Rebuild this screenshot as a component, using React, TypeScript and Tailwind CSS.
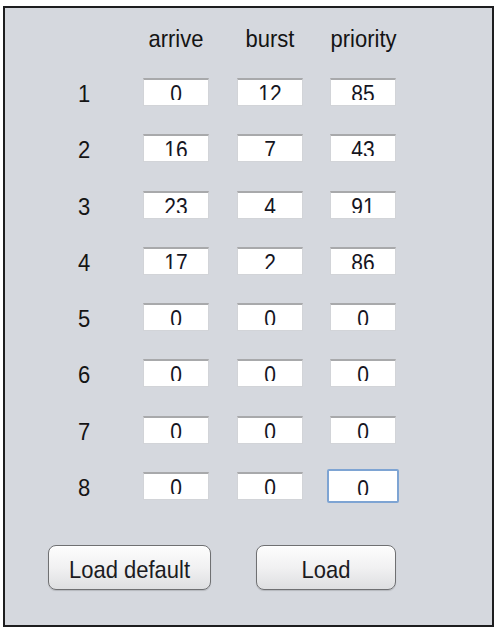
import React from "react";

type Row = { arrive: number; burst: number; priority: number };

const rows: Row[] = [
  { arrive: 0, burst: 12, priority: 85 },
  { arrive: 16, burst: 7, priority: 43 },
  { arrive: 23, burst: 4, priority: 91 },
  { arrive: 17, burst: 2, priority: 86 },
  { arrive: 0, burst: 0, priority: 0 },
  { arrive: 0, burst: 0, priority: 0 },
  { arrive: 0, burst: 0, priority: 0 },
  { arrive: 0, burst: 0, priority: 0 },
];

const font = "font-['Liberation_Sans',Arial,sans-serif]";

/* ── Swing-ish text field, glyphs clipped at the bottom like the shot ── */
const Field = ({ value, focused }: { value: number; focused?: boolean }) => (
  <div
    className={
      focused
        ? "w-[72px] h-[34px] -mx-[3px] -my-[3px] rounded-[2px] border-2 border-[#7ea4d3] bg-white p-[1px]"
        : "w-[66px] h-[28px] border border-[#d2d4d8] border-t-2 border-t-[#a8a9ab] bg-white"
    }
  >
    <div className={`h-[19px] overflow-hidden text-center text-[21px] leading-[22px] text-[#15151f] ${focused ? "mt-[4px]" : "mt-[1px]"}`}>
      <span className="block mt-[2px] scale-y-110">{value}</span>
    </div>
  </div>
);

const Button = ({ label, width }: { label: string; width: string }) => (
  <button
    className={`${width} h-[45px] pt-[3px] rounded-[8px] border border-[#6f7072] bg-gradient-to-b from-[#fdfdfd] via-[#f1f1f2] to-[#dedfe1] text-[22px] text-[#1b1b22] shadow-[inset_0_1px_0_#ffffff,0_1px_1px_rgba(0,0,0,0.15)]`}
  >
    <span className="inline-block scale-y-110">{label}</span>
  </button>
);

export default function App() {
  return (
    <div className={`w-[496px] h-[634px] bg-white pt-[6px] pl-[3px] ${font}`}>
      <div className="w-[491px] h-[621px] border-2 border-[#1d1d1f] bg-[#d5d8de] flex flex-col">
        {/* header */}
        <div className="grid grid-cols-[138px_66px_28px_66px_27px_67px] pt-[19px] text-[22px] leading-[24px] text-[#141414]">
          <div />
          <div className="text-center scale-y-110">arrive</div>
          <div />
          <div className="text-center scale-y-110">burst</div>
          <div />
          <div className="text-center scale-y-110">priority</div>
        </div>

        {/* rows */}
        <div className="flex flex-col gap-[28.3px] mt-[27px]">
          {rows.map((r, i) => (
            <div key={i} className="grid grid-cols-[138px_66px_28px_66px_27px_67px] h-[28px] items-center">
              <div className="pl-[73px] pt-[4px] text-[22px] leading-[24px] text-[#141414] scale-y-110">{i + 1}</div>
              <Field value={r.arrive} />
              <div />
              <Field value={r.burst} />
              <div />
              <Field value={r.priority} focused={i === 7} />
            </div>
          ))}
        </div>

        {/* buttons */}
        <div className="flex gap-[45px] pl-[43px] mt-[45px]">
          <Button label="Load default" width="w-[163px]" />
          <Button label="Load" width="w-[140px]" />
        </div>
      </div>
    </div>
  );
}
